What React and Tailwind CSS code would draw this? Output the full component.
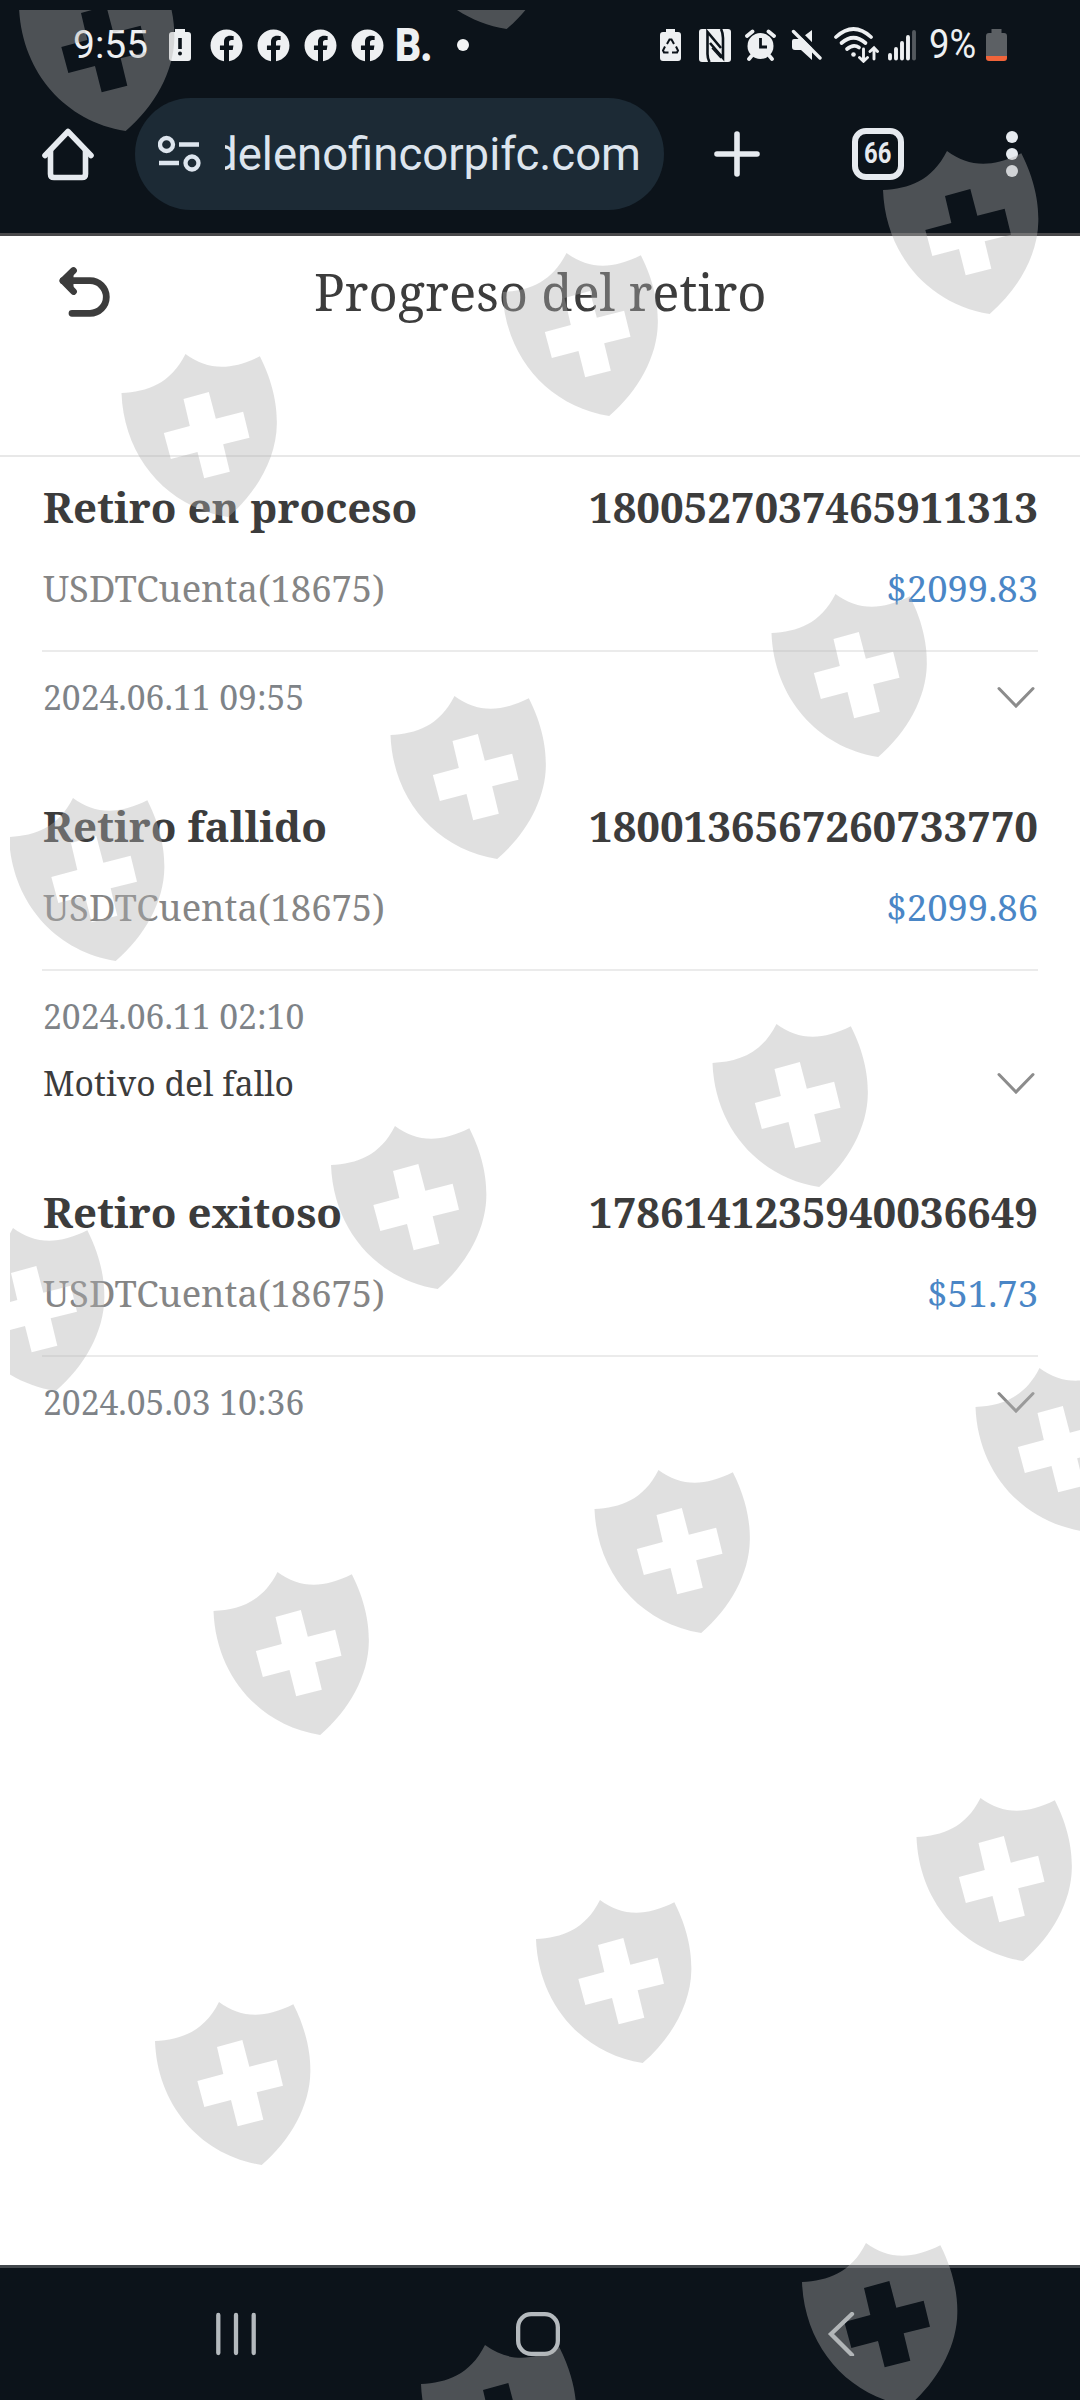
import React from 'react';
import { FaFacebook } from 'react-icons/fa';

const withdrawals = [
  {
    status: 'Retiro en proceso',
    order: '1800527037465911313',
    account: 'USDTCuenta(18675)',
    amount: '$2099.83',
    date: '2024.06.11 09:55',
  },
  {
    status: 'Retiro fallido',
    order: '1800136567260733770',
    account: 'USDTCuenta(18675)',
    amount: '$2099.86',
    date: '2024.06.11 02:10',
    reason: 'Motivo del fallo',
  },
  {
    status: 'Retiro exitoso',
    order: '1786141235940036649',
    account: 'USDTCuenta(18675)',
    amount: '$51.73',
    date: '2024.05.03 10:36',
  },
];

// Position of each shield's top-left peak
const shields = [
  [83, -32], [464, -134],
  [185.5, 354], [566.5, 253], [947, 151],
  [73, 798], [454.5, 696], [835.5, 594],
  [13, 1228], [395, 1126], [776.5, 1024],
  [277.5, 1572], [658.5, 1470], [1039.5, 1368],
  [219, 2002], [600, 1900], [980.5, 1798],
  [485, 2345], [866, 2243],
];

const App = () => (
  <div className="relative w-[1080px] h-[2400px] overflow-hidden bg-white flex flex-col">
    <header className="h-[236px] bg-[#0c131a] border-b-3 border-[#49494b] flex flex-col">
      <StatusBar />
      <BrowserBar />
    </header>

    <main className="flex-1 font-['Noto_Serif','DejaVu_Serif',serif]">
      <div className="h-[221px] border-b-2 border-[#e8e8e8] flex items-start pl-[57px] pt-[26px]">
        <BackIcon />
        <h1 className="ml-[201px] text-[50.7px] leading-[60px] text-[#3c3c3c] whitespace-nowrap">
          Progreso del retiro
        </h1>
      </div>
      <div className="px-[42px] pt-[20px]">
        {withdrawals.map((item) => (
          <WithdrawalItem key={item.order} item={item} />
        ))}
      </div>
    </main>

    <NavigationBar />
    <ShieldOverlay />
  </div>
);

const WithdrawalItem = ({ item }) => (
  <section className="mb-[69px] leading-[60px] whitespace-nowrap">
    <div className="pl-px flex justify-between text-[42px] font-bold text-[#3c3c3c]">
      <h2>{item.status}</h2>
      <span className="tracking-[-0.1px]">{item.order}</span>
    </div>
    <div className="mt-[21px] pb-[32px] pl-px border-b-2 border-[#ebebeb] flex justify-between text-[36.4px]">
      <span className="text-[#858585]">{item.account}</span>
      <span className="text-[#4a86c6]">{item.amount}</span>
    </div>
    <div className="mt-[15px] pl-px flex items-end justify-between text-[33.7px]">
      <div className="flex flex-col gap-[7px]">
        <span className="text-[#7e8388]">{item.date}</span>
        {item.reason && <span className="text-[#3c3c3c]">{item.reason}</span>}
      </div>
      <svg className="w-[42px] h-[60px]" viewBox="0 0 42 60" fill="none">
        <path d="M3 21.500L20 39L37 21.500" stroke="#8c8c8c" strokeWidth="3" strokeLinecap="round" />
      </svg>
    </div>
  </section>
);

const StatusBar = () => (
  <div className="h-[90px] shrink-0 flex items-center pl-[73px] pr-[73px] text-[#eef0f2] font-['Roboto',sans-serif]">
    <span className="w-[95px] text-[39px] leading-[90px]">9:55</span>
    <svg className="w-[24px] h-[34px] mr-[18px]" viewBox="0 0 24 34">
      <path d="M7 1H17V4H20Q23 4 23 7V30Q23 33 20 33H4Q1 33 1 30V7Q1 4 4 4H7Z" fill="#eef0f2" />
      <path d="M10.200 10H13.800V21H10.200Z" fill="#0c131a" />
      <circle cx="12" cy="25.500" r="2" fill="#0c131a" />
    </svg>
    <div className="flex gap-[14px]">
      <FaFacebook className="w-[33px] h-[33px]" />
      <FaFacebook className="w-[33px] h-[33px]" />
      <FaFacebook className="w-[33px] h-[33px]" />
      <FaFacebook className="w-[33px] h-[33px]" />
    </div>
    <span className="ml-[11px] w-[62px] text-[46px] leading-[90px] font-black tracking-[-1px] origin-left scale-x-[0.88]">B.</span>
    <span className="w-[12px] h-[12px] rounded-full bg-[#f4f5f6]" />

    <div className="ml-auto flex items-center">
      {/* battery protection */}
      <svg className="w-[23px] h-[34px]" viewBox="0 0 23 34">
        <path d="M7 1H16V4H19Q22 4 22 7V30Q22 33 19 33H4Q1 33 1 30V7Q1 4 4 4H7Z" fill="#eef0f2" />
        <g fill="none" stroke="#0c131a" strokeWidth="2">
          <path d="M8 16L10.500 11.500H12.500L15 16" />
          <path d="M6 18.500L4 22.500L5 24.500H9.500" />
          <path d="M17 18.500L19 22.500L18 24.500H13" />
        </g>
      </svg>
      {/* nfc */}
      <svg className="w-[32px] h-[33px] ml-[17px]" viewBox="0 0 32 33">
        <rect width="32" height="33" rx="3" fill="#eef0f2" />
        <path d="M10.500 33Q8.500 29 8.500 25V3L22 19" fill="none" stroke="#0c131a" strokeWidth="2.600" />
        <path d="M22 0Q24 4 24 9V29L11 14" fill="none" stroke="#0c131a" strokeWidth="2.600" />
        <path d="M13 19L22 29" stroke="#0c131a" strokeWidth="1.500" />
      </svg>
      {/* alarm */}
      <svg className="w-[31px] h-[32px] ml-[14px]" viewBox="0 0 31 32">
        <circle cx="15.500" cy="17" r="13" fill="#eef0f2" />
        <path d="M2 7L7.500 2.500M29 7L23.500 2.500M6.500 27L4 30M24.500 27L27 30" stroke="#eef0f2" strokeWidth="3.800" strokeLinecap="round" />
        <path d="M15.500 9V18H22" fill="none" stroke="#0c131a" strokeWidth="2.800" />
      </svg>
      {/* sound off */}
      <svg className="w-[31px] h-[32px] ml-[15px]" viewBox="0 0 31 32">
        <path d="M1 12Q1 10 3 10H9L21 1V31L10 21H4Q1 21 1 18Z" fill="#eef0f2" />
        <path d="M4 -1L32 27" stroke="#0c131a" strokeWidth="4" />
        <path d="M2.500 2.500L29 29" stroke="#eef0f2" strokeWidth="3.400" strokeLinecap="round" />
      </svg>
      {/* wifi */}
      <svg className="w-[45px] h-[36px] ml-[12px]" viewBox="0 0 45 36" fill="none" stroke="#eef0f2" strokeWidth="3.700" strokeLinecap="round">
        <path d="M2 10Q19.500 -6 37 10" />
        <path d="M7.500 16Q19.500 5.500 31.500 16" />
        <path d="M13 22Q19.500 16.500 25 20.500" />
        <circle cx="19.500" cy="27.500" r="2.300" fill="#eef0f2" stroke="none" />
        <path d="M29.500 22V34M25.500 30.500L29.500 34.300L33.500 30.500" strokeWidth="2.900" />
        <path d="M40 32V21M36 24.500L40 20.700L43.500 24.500" strokeWidth="2.900" />
      </svg>
      {/* signal */}
      <svg className="w-[28px] h-[32px] ml-[9px]" viewBox="0 0 28 32" strokeWidth="3.900" strokeLinecap="round">
        <path d="M2 26V29.500M8 20V29.500M14 14V29.500M20 8V29.500" stroke="#eef0f2" />
        <path d="M26 3V29.500" stroke="#54595e" />
      </svg>
      <span className="ml-[13px] w-[57px] text-[40px] leading-[90px] origin-left scale-x-[0.91]">9%</span>
      <svg className="w-[21px] h-[33px]" viewBox="0 0 21 33">
        <path d="M5.500 0H15.500V4H18Q21 4 21 7V27H0V7Q0 4 3 4H5.500Z" fill="#5c6064" />
        <path d="M0 27H21V29Q21 32 18 32H3Q0 32 0 29Z" fill="#f0643a" />
      </svg>
    </div>
  </div>
);

const BrowserBar = () => (
  <div className="h-[128px] shrink-0 flex items-center pl-[42px] font-['Roboto',sans-serif]">
    <svg className="w-[52px] h-[54px]" viewBox="0 0 52 54" fill="none" stroke="#e6eaef" strokeWidth="5.600" strokeLinecap="round" strokeLinejoin="round">
      <path d="M3 28.500L26 4.500L49 28.500" />
      <path d="M8.500 24V47Q8.500 50.500 12 50.500H40Q43.500 50.500 43.500 47V24" />
    </svg>
    <div className="ml-[41px] w-[529px] h-[112px] rounded-full bg-[#1c2a35] flex items-center pl-[23px]">
      <svg className="w-[43px] h-[38px]" viewBox="0 0 43 38" fill="none" stroke="#dde5ee" strokeWidth="4.300">
        <circle cx="8.500" cy="9.500" r="6.500" />
        <circle cx="34" cy="28" r="6.500" />
        <path d="M21 9.500H41M1 28H21" />
      </svg>
      <div className="ml-[24px] w-[416px] overflow-hidden flex justify-end text-[45.5px] leading-[60px] text-[#dde5ee]">
        <span className="relative top-px">delenofincorpifc.com</span>
      </div>
    </div>
    <svg className="ml-[50px] w-[46px] h-[46px]" viewBox="0 0 46 46" stroke="#e6eaef" strokeWidth="5.600" strokeLinecap="round">
      <path d="M23 3V43M3 23H43" />
    </svg>
    <div className="ml-[92px] w-[52px] h-[52px] border-[6px] border-[#e6eaef] rounded-[14px] flex items-center justify-center text-[29px] font-bold text-[#e6eaef]">
      <span className="scale-x-[0.82]">66</span>
    </div>
    <div className="ml-[102px] flex flex-col gap-[5px]">
      <span className="w-[12px] h-[12px] rounded-full bg-[#e6eaef]" />
      <span className="w-[12px] h-[12px] rounded-full bg-[#e6eaef]" />
      <span className="w-[12px] h-[12px] rounded-full bg-[#e6eaef]" />
    </div>
  </div>
);

const BackIcon = () => (
  <svg className="w-[56px] h-[60px] mt-[2px]" viewBox="0 0 56 60" fill="none" stroke="#3c3c3c" strokeWidth="6.800" strokeLinecap="round">
    <path d="M6 16.700H33A16.300 16.300 0 0 1 33 49.300H15" />
    <path d="M16.500 6L6.500 16.700L16.500 27.500Z" fill="#3c3c3c" stroke="none" />
    <path d="M16.500 6.500L6 16.700L16.500 27.500" strokeLinejoin="round" />
  </svg>
);

const NavigationBar = () => (
  <footer className="h-[135px] bg-[#0c131a] border-t-3 border-[#42474c] flex pl-[214px] pt-[44px]">
    <svg className="w-[44px] h-[44px]" viewBox="0 0 44 44" stroke="#b4b9bd" strokeWidth="4.300" strokeLinecap="round">
      <path d="M4.300 3V41M22 3V41M39.700 3V41" />
    </svg>
    <svg className="ml-[258px] w-[44px] h-[44px]" viewBox="0 0 44 44" fill="none" stroke="#b4b9bd" strokeWidth="4.300">
      <rect x="2.150" y="2.150" width="39.700" height="39.700" rx="13" />
    </svg>
    <svg className="ml-[266px] w-[30px] h-[44px]" viewBox="0 0 30 44" fill="none" stroke="#b4b9bd" strokeWidth="4.300" strokeLinecap="round">
      <path d="M26 2L5 22L26 43" />
    </svg>
  </footer>
);

// Watermark drawn over the whole screen
const ShieldOverlay = () => (
  <svg
    className="absolute left-[10px] top-[10px] w-[1070px] h-[2390px] pointer-events-none"
    viewBox="10 10 1070 2390"
    fill="#b0b0b0"
    fillOpacity="0.395"
    fillRule="evenodd"
  >
    {shields.map(([x, y]) => (
      <path
        key={`${x}-${y}`}
        transform={`translate(${x} ${y}) scale(0.33333) translate(-235 -90)`}
        d="M43 207C120 203 190 180 235 90C300 138 370 141 458 97C500 180 510 250 509 300C508 400 450 505 363 579C180 550 50 400 43 207ZM229 225L305 204L326 284L408 263L427 341L348 361L368 443L291 463L271 384L191 405L170 327L248 306Z"
      />
    ))}
  </svg>
);

export default App;
